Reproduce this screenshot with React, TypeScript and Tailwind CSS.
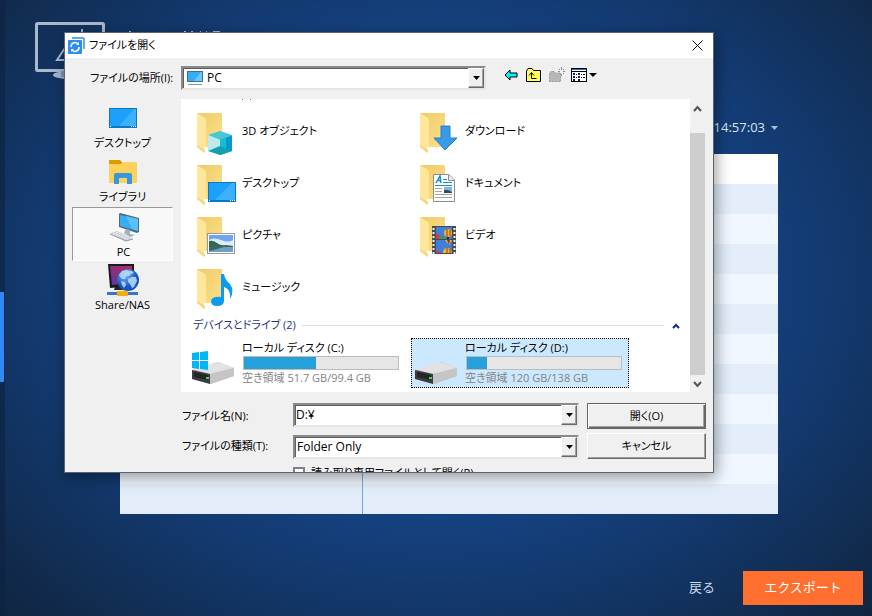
import React, { useState } from "react";

interface Place {
    id: string;
    label: string;
    icon: React.ReactNode;
}

const DesktopIcon = () => (
    <svg width="32" height="32" viewBox="0 0 32 32">
        <rect x="2" y="6" width="28" height="20" fill="#0c78c4" />
        <rect x="3" y="7" width="26" height="17" fill="#1ca0fb" />
        <path d="M12 24 L27 7 H29 V24 Z" fill="#3db0fd" />
        <path d="M3 24.500 h1 M24 24.500 h1 M26 24.500 h1 M28 24.500 h1" stroke="#fff" />
    </svg>
);

const LibraryIcon = () => (
    <svg width="32" height="32" viewBox="0 0 32 32">
        <path d="M2 5 q0 -1 1 -1 H13 l2 2 v2 H2 Z" fill="#df9a00" />
        <path d="M2 8 H14 l2 -2 H29 q1 0 1 1 V27 H2 Z" fill="#fdd25c" />
        <path d="M7 28 V19 q0 -2 2 -2 H23 q2 0 2 2 V28 H20 V22 H12 V28 Z" fill="#3a96dd" />
    </svg>
);

const ComputerIcon = () => (
    <svg width="32" height="32" viewBox="0 0 32 32">
        <path d="M11 3 L12 2 L31 7 V21 L29 22 L11 16 Z" fill="#4d6b80" />
        <path d="M12 4 L30 8 V20 L12 15 Z" fill="#35aef5" />
        <path d="M18 5 L30 8 V20 L24 18 Z" fill="#58c0fa" />
        <path d="M18 18 L22 19 V23 L27 24 L22 26 L16 22 Z" fill="#9eb1bd" />
        <path d="M2 22 L9 20 L25 27 L18 30 Z" fill="#cbd0d4" />
        <path d="M5 22 L20 28 M8 21 L23 27" stroke="#f4f6f7" strokeDasharray="2 1" />
        <path d="M2 23 L18 30 L25 28" stroke="#8d979e" fill="none" />
    </svg>
);

const ShareIcon = () => (
    <svg width="32" height="32" viewBox="0 0 32 32">
        <defs>
            <linearGradient id="screen" x1="0" y1="1" x2="1" y2="0">
                <stop offset="0" stopColor="#5b37a5" />
                <stop offset="1" stopColor="#c22552" />
            </linearGradient>
            <radialGradient id="globe" cx=".4" cy=".3">
                <stop offset="0" stopColor="#73b8fa" />
                <stop offset="1" stopColor="#1556bd" />
            </radialGradient>
        </defs>
        <path d="M1 0 H27 V22 L3 24 Z" fill="#181820" />
        <path d="M3 2 H25 V19 L5 21 Z" fill="url(#screen)" />
        <path d="M8 23 H17 V26 H7 Z" fill="#252525" />
        <circle cx="21" cy="16" r="11" fill="url(#globe)" />
        <path d="M12 11 L15 7 L19 6 L25 7 L27 9 L24 10 L22 12 L19 12 L18 15 L15 15 L13 13 Z M21 15 L25 13 L29 13 L30 17 L27 23 L25 24 L23 20 L21 18 Z M14 17 L18 18 L19 21 L17 24 L15 21 Z" fill="#b9dcfb" fillOpacity=".85" />
        <rect y="28" width="31" height="3" fill="#3d72cf" />
        <rect x="10" y="27" width="11" height="5" rx="1" fill="#f4ad13" />
    </svg>
);

const overlays: Record<string, React.ReactNode> = {
    objects: (
        <>
            <path d="M18 28 L30 24 L42 28 L30 33 Z" fill="#46c7d6" />
            <path d="M18 28 L30 33 V48 L18 44 Z" fill="#bdebf0" />
            <path d="M30 33 L42 28 V44 L30 48 Z" fill="#0799c9" />
            <path d="M30 33 L36 30 V46 L30 48 Z" fill="#17bcd0" />
            <path d="M18 44 L30 39 V48 Z M30 39 L42 44 L30 48 Z" fill="#12a1ad" />
        </>
    ),
    download: <path d="M28 19 H37 V31 H44 L32 43 L21 31 H28 Z" fill="#389bea" stroke="#2380cd" />,
    desktop: (
        <>
            <rect x="18" y="23" width="28" height="20" fill="#0c78c4" />
            <rect x="19" y="24" width="26" height="17" fill="#1ca0fb" />
            <path d="M25 41 L42 24 H45 V41 Z" fill="#3db0fd" />
            <path d="M19 41.500 h1 M40 41.500 h1 M42 41.500 h1 M44 41.500 h1" stroke="#fff" />
        </>
    ),
    document: (
        <>
            <path d="M20.5 15.5 H36 L41.5 21 V42.5 H20.5 Z" fill="#fff" stroke="#8d8d8d" />
            <path d="M35.500 15.500 V21.500 H41" fill="#eee" stroke="#8d8d8d" />
            <path d="M23 24 L27 17 L28 24 M24.500 21.500 H28" stroke="#178bd7" strokeWidth="1.500" fill="none" />
            <path d="M30 20.500 h4 M30 23.500 h9 M22 26.500 h17" stroke="#178bd7" />
            <path d="M22 29.500 h7 M22 32.500 h7 M22 35.500 h17 M22 38.500 h17" stroke="#a5a5a5" />
            <rect x="31" y="28" width="8" height="6" fill="#80b5ea" />
            <path d="M31 34 V31 L35 31 L39 33 V34 Z" fill="#34495c" />
        </>
    ),
    picture: (
        <>
            <rect x="17.500" y="22.500" width="27" height="20" fill="#fff" stroke="#9a9a9a" />
            <rect x="19" y="24" width="24" height="17" fill="#6da5ef" />
            <path d="M19 29 q5 -3 12 0 t12 0 V36 H19 Z" fill="#dcecfb" />
            <path d="M19 30 Q23 29 27 32 T36 34 L43 35 V37 H19 Z" fill="#38684c" />
            <rect x="19" y="36" width="24" height="5" fill="#6f9fc6" />
            <path d="M19 36 L34 36 L24 39 L19 40 Z" fill="#376878" />
        </>
    ),
    video: (
        <>
            <rect x="19" y="15" width="24" height="28" fill="#4b4b4b" />
            <path d="M20.500 17 V43 M41.500 17 V43" stroke="#efefef" strokeWidth="2" strokeDasharray="2 2" />
            <rect x="23" y="16" width="16" height="12" fill="#3e7fdb" />
            <rect x="23" y="29" width="16" height="13" fill="#3e7fdb" />
            <path d="M23 22 L30 28 H23 Z" fill="#d6355c" />
            <path d="M27 25 L35 28 H26 Z" fill="#3c9a48" />
            <ellipse cx="35" cy="22" rx="4" ry="4" fill="#f5b51b" />
            <path d="M34 18 V26 M37 19 V25" stroke="#a0362d" />
            <path d="M34 27 h2" stroke="#222" strokeWidth="2" />
            <path d="M32 29 H39 L36 34 Z" fill="#f5b51b" />
            <path d="M34 29 L36 34 L37 29 Z" fill="#8c3440" />
            <path d="M30 42 q0 -5 4 -5 t5 5 Z" fill="#f5b51b" />
            <path d="M34 37 V42 M37 38 V42" stroke="#a0362d" />
            <path d="M23 39 L29 42 H23 Z" fill="#d6355c" />
        </>
    ),
    music: (
        <path d="M31 11 H34 Q35 17 40 21 Q45 28 40 36 Q41 26 34 24 V38 Q34 43 27 43 Q21 43 21 38 Q22 33 31 34 Z" fill="#0d9bf2" />
    ),
};

function FolderIcon({ kind }: { kind: string }) {
    return (
        <svg width="48" height="48" viewBox="0 0 48 48" className="shrink-0">
            <defs>
                <linearGradient id={`back-${kind}`} x1="0" y1="0" x2="1" y2="1">
                    <stop offset="0" stopColor="#edcb67" />
                    <stop offset="1" stopColor="#ffe08b" />
                </linearGradient>
            </defs>
            <path d="M7 6 H32 V40 H15 Z" fill={`url(#back-${kind})`} />
            <path d="M7 6 L15 11 Q16 12 16 14 V40 H14 V46 L7 40 Z" fill="#ffe69d" />
            <path d="M7 38 L15 43 V46 L7 40 Z" fill="#f8d57a" />
            {overlays[kind]}
        </svg>
    );
}

function DriveIcon({ system }: { system: boolean }) {
    return (
        <svg width="48" height="48" viewBox="0 0 48 48" className="shrink-0">
            <path d="M2 31 L28 23 L44 29 V37 L21 45 L2 40 Z" fill="#c2c2c4" />
            <path d="M2 30 L27 23 L44 29 L20 35 Z" fill="#e2e2e5" />
            <path d="M2 31 L20 35 V45 L2 40 Z" fill="#3b3d40" />
            <path d="M4 33 L18 36 V41 L4 38 Z" fill="#232527" />
            <path d="M20 35 L44 29 V37 L20 45 Z" fill="#c5c5c8" />
            <rect x="16" y="38" width="3" height="2" fill="#3ee143" />
            {system && (
                <path d="M2 14 L9 13 V21 H2 Z M10 13 L18 12 V21 H10 Z M2 22 H9 V30 L2 29 Z M10 22 H18 V31 L10 30 Z" fill="#00b7f1" />
            )}
        </svg>
    );
}

const places: Place[] = [
    { id: "desktop", label: "デスクトップ", icon: <DesktopIcon /> },
    { id: "library", label: "ライブラリ", icon: <LibraryIcon /> },
    { id: "pc", label: "PC", icon: <ComputerIcon /> },
    { id: "share", label: "Share/NAS", icon: <ShareIcon /> },
];

const folders = [
    { kind: "objects", label: "3D オブジェクト" },
    { kind: "download", label: "ダウンロード" },
    { kind: "desktop", label: "デスクトップ" },
    { kind: "document", label: "ドキュメント" },
    { kind: "picture", label: "ピクチャ" },
    { kind: "video", label: "ビデオ" },
    { kind: "music", label: "ミュージック" },
];

const drives = [
    { id: "C", label: "ローカル ディスク (C:)", free: "空き領域 51.7 GB/99.4 GB", used: 47, system: true },
    { id: "D", label: "ローカル ディスク (D:)", free: "空き領域 120 GB/138 GB", used: 13, system: false },
];

const sunken =
    "flex h-6 min-w-0 items-stretch border-2 border-t-[#8a8a8a] border-l-[#8a8a8a] border-r-[#e6e6e6] border-b-[#e6e6e6] bg-white text-xs shadow-[inset_1px_1px_0_#5f5f5f]";

const DropArrow = () => (
    <span className="pointer-events-none flex w-4 shrink-0 items-center justify-center border border-t-white border-l-white border-r-[#696969] border-b-[#696969] bg-[#f0f0f0] shadow-[inset_-1px_-1px_0_#a0a0a0]">
        <svg width="7" height="4" viewBox="0 0 7 4">
            <path d="M0 0 H7 L3.500 4 Z" fill="#000" />
        </svg>
    </span>
);

function OpenDialog() {
    const [place, setPlace] = useState("pc");
    const [drive, setDrive] = useState("D");
    const [fileName, setFileName] = useState("D:¥");

    return (
        <section
            role="dialog"
            aria-labelledby="dialog-title"
            className="absolute top-8 right-[158px] left-16 border border-[#5c6470] bg-[#f0f0f0] text-[11px] text-black shadow-[2px_4px_14px_rgba(0,0,0,0.4)]"
        >
            <header className="flex h-[25px] items-center bg-white pr-2 pl-[3px]">
                <svg width="17" height="17" viewBox="0 0 17 17">
                    <path d="M4 1 H15 q1 0 1 1 V12" fill="none" stroke="#2c8df5" strokeWidth="1.500" />
                    <rect x="0" y="3" width="14" height="14" rx="1" fill="#2c8df5" />
                    <path d="M3 10 a4 4 0 0 1 7 -3 M11 10 a4 4 0 0 1 -7 3" fill="none" stroke="#fff" strokeWidth="1.500" />
                    <path d="M8 8 H11 V5 Z M6 12 H3 V15 Z" fill="#fff" />
                </svg>
                <h2 id="dialog-title" className="ml-1 flex-1">ファイルを開く</h2>
                <button type="button" aria-label="閉じる" className="flex size-4 items-center justify-center">
                    <svg width="11" height="11" viewBox="0 0 11 11">
                        <path d="M0.500 0.500 L10.500 10.500 M10.500 0.500 L0.500 10.500" stroke="#111" />
                    </svg>
                </button>
            </header>

            <div className="flex items-center pt-2 pb-[9px] pl-[25px]">
                <label htmlFor="look-in" className="w-[91px] shrink-0 whitespace-nowrap">ファイルの場所(I):</label>
                <div className={`${sunken} flex-1`}>
                    <svg width="18" height="18" viewBox="0 0 18 18" className="ml-[3px] shrink-0 self-center">
                        <rect x="1" y="2" width="16" height="11" fill="#3d7288" />
                        <rect x="2" y="3" width="14" height="9" fill="#35adf4" />
                        <path d="M8 12 L15 3 H16 V12 Z" fill="#6cc8fa" />
                        <path d="M2 15.500 H16" stroke="#7b96a6" />
                    </svg>
                    <select id="look-in" className="min-w-0 flex-1 appearance-none bg-transparent pl-[3px]">
                        <option>PC</option>
                    </select>
                    <DropArrow />
                </div>
                <div className="-mt-1.5 ml-[18px] flex w-[209px] items-center gap-2">
                    <button type="button" aria-label="戻る">
                        <svg width="14" height="12" viewBox="0 0 14 12">
                            <path d="M1 6 L6 1 V4 H13 V8 H6 V11 Z" fill="#00f5ff" stroke="#000" />
                        </svg>
                    </button>
                    <button type="button" aria-label="上へ">
                        <svg width="15" height="14" viewBox="0 0 15 14">
                            <path d="M0.500 13.500 V3 L2 0.500 H6 L7.500 2.500 H14.500 V13.500 Z" fill="#ffff5c" stroke="#000" />
                            <path d="M5.500 5 V10.500 H10.500 M3 7.500 L5.500 4.500 L8 7.500" fill="none" stroke="#000" />
                        </svg>
                    </button>
                    <button type="button" aria-label="新しいフォルダー" disabled>
                        <svg width="16" height="16" viewBox="0 0 16 16">
                            <path d="M0.500 14.500 V6 L2 4.500 H5 L6.500 6 H11.500 V14.500 Z" fill="#b7b7b7" stroke="#989898" strokeDasharray="2 1" />
                            <path d="M12.500 0 V3 M12.500 7 V9 M9 4.500 H11 M14 4.500 H16 M10 2 l1 1 M14 6 l1 1 M15 2 l-1 1" stroke="#8c8c8c" />
                        </svg>
                    </button>
                    <button type="button" aria-label="表示" className="-ml-0.5 flex items-center gap-0.5">
                        <svg width="16" height="14" viewBox="0 0 16 14">
                            <rect x="0.500" y="0.500" width="15" height="13" fill="#fff" stroke="#000" />
                            <path d="M1 1.500 H15" stroke="#0878d0" />
                            <path d="M1 3.500 H15" stroke="#000" />
                            <path d="M2 6 h2 M7 6 h2 M2 9 h2 M7 9 h2 M2 12 h2 M7 12 h2" stroke="#16166b" strokeWidth="2" />
                            <path d="M5 6.500 h1 M10 6.500 h1 M12 6.500 h2 M5 9.500 h1 M10 9.500 h1 M12 9.500 h2" stroke="#000" />
                        </svg>
                        <svg width="8" height="4" viewBox="0 0 8 4">
                            <path d="M0 0 H8 L4 4 Z" fill="#000" />
                        </svg>
                    </button>
                </div>
            </div>

            <div className="flex pr-2">
                <nav className="flex w-[116px] shrink-0 flex-col pr-2 pl-[7px]">
                    {places.map((p) => (
                        <button
                            key={p.id}
                            type="button"
                            onClick={() => setPlace(p.id)}
                            className={`flex h-[54px] flex-col items-center border leading-4 ${p.id === place
                                ? "border-t-[#999] border-l-[#999] border-r-white border-b-white bg-[#f8f8f8] pt-[3px] pl-0.5"
                                : "border-transparent pt-0.5"
                                }`}
                        >
                            {p.icon}
                            <span className="pt-px">{p.label}</span>
                        </button>
                    ))}
                </nav>

                <div className="min-w-0 flex-1 bg-white pb-1">
                    {/* tail of the group heading that is scrolled out above */}
                    <svg width="80" height="6" viewBox="0 0 80 6" className="block">
                        <path d="M61 0.500 h1 M69 0.500 h1" stroke="#5a6fae" />
                    </svg>
                    <ul className="grid grid-cols-[repeat(auto-fill,218px)] gap-x-[5px] pl-[7px]">
                        {folders.map((f) => (
                            <li key={f.kind} className="flex h-[52px] items-center gap-1 pl-0.5">
                                <FolderIcon kind={f.kind} />
                                {f.label}
                            </li>
                        ))}
                    </ul>
                    <div className="flex h-[25px] items-center gap-1.5 pr-2 pl-3 text-[#1e3287]">
                        <h3 className="whitespace-nowrap">デバイスとドライブ (2)</h3>
                        <span className="h-px flex-1 bg-[#d5dfec]" />
                        <button type="button" aria-label="折りたたむ" className="flex w-3 justify-center">
                            <svg width="8" height="6" viewBox="0 0 8 6">
                                <path d="M1 5 L4 2 L7 5" fill="none" stroke="#0b2d87" strokeWidth="2" />
                            </svg>
                        </button>
                    </div>
                    <div className="grid grid-cols-[repeat(auto-fill,218px)] gap-x-[5px] pl-[7px]">
                        {drives.map((d) => (
                            <button
                                key={d.id}
                                type="button"
                                onClick={() => setDrive(d.id)}
                                className={`flex h-[50px] items-center gap-1 border pr-1 pl-px text-left leading-4 ${d.id === drive
                                    ? "border-dotted border-black bg-[#cce8ff]"
                                    : "border-transparent"
                                    }`}
                            >
                                <DriveIcon system={d.system} />
                                <span className="flex min-w-0 flex-1 flex-col whitespace-nowrap">
                                    <span>{d.label}</span>
                                    <span className="mr-0.5 ml-px block h-3.5 border border-[#bcbcbc] bg-[#e6e6e6]">
                                        <span className="block h-full bg-[#26a0da]" style={{ width: `${d.used}%` }} />
                                    </span>
                                    <span className="text-[#838383]">{d.free}</span>
                                </span>
                            </button>
                        ))}
                    </div>
                </div>

                <div className="flex w-[15px] shrink-0 flex-col items-center">
                    <svg width="9" height="34" viewBox="0 0 9 34">
                        <path d="M1 12 L4.500 8 L8 12" fill="none" stroke="#555" strokeWidth="2" />
                    </svg>
                    <span className="w-full flex-1 bg-[#cdcdcd]" />
                    <svg width="9" height="17" viewBox="0 0 9 17">
                        <path d="M1 7 L4.500 11 L8 7" fill="none" stroke="#555" strokeWidth="2" />
                    </svg>
                </div>
            </div>

            <form className="flex flex-col gap-1 pt-[11px] pr-[7px] pl-[117px]" onSubmit={(e) => e.preventDefault()}>
                <div className="flex h-[26px] items-start">
                    <label htmlFor="file-name" className="w-[111px] shrink-0 leading-[26px]">ファイル名(N):</label>
                    <div className={`${sunken} flex-1`}>
                        <input
                            id="file-name"
                            value={fileName}
                            onChange={(e) => setFileName(e.target.value)}
                            className="min-w-0 flex-1 bg-transparent pl-px outline-none"
                        />
                        <DropArrow />
                    </div>
                    <button
                        type="submit"
                        className="ml-2 h-[26px] w-[119px] border border-[#646464] bg-[#f0f0f0] shadow-[inset_1px_1px_0_#fff,inset_-1px_-1px_0_#696969,inset_-2px_-2px_0_#a0a0a0]"
                    >
                        開く(O)
                    </button>
                </div>
                <div className="flex h-[26px] items-end">
                    <label htmlFor="file-type" className="w-[111px] shrink-0 leading-[26px]">ファイルの種類(T):</label>
                    <div className={`${sunken} flex-1`}>
                        <select id="file-type" className="min-w-0 flex-1 appearance-none bg-transparent pl-0.5">
                            <option>Folder Only</option>
                        </select>
                        <DropArrow />
                    </div>
                    <button
                        type="button"
                        className="ml-2 h-[26px] w-[119px] border border-t-white border-l-white border-r-[#696969] border-b-[#696969] bg-[#f0f0f0] shadow-[inset_-1px_-1px_0_#a0a0a0]"
                    >
                        キャンセル
                    </button>
                </div>
                <div className="mt-1 h-[5px] overflow-hidden pl-[111px]">
                    <label className="flex items-start gap-1.5 leading-3">
                        <input type="checkbox" className="size-3 appearance-none border-2 border-[#808080] bg-white" />
                        読み取り専用ファイルとして開く(R)
                    </label>
                </div>
            </form>
        </section>
    );
}

export default function App() {
    return (
        <main className="relative flex min-h-screen flex-col bg-[radial-gradient(ellipse_at_50%_45%,#1a56a6_0%,#174a90_35%,#13396f_65%,#10253f_100%)] font-['Open_Sans','Noto_Sans_CJK_JP',sans-serif] [font-feature-settings:'palt']">
            <aside className="absolute inset-y-0 left-0 flex w-[5px] items-center bg-[#0d2445]/70">
                <span className="mt-[58px] h-[90px] w-1 bg-[#2f8af5]" />
            </aside>

            <header className="pt-[22px] pl-[35px]">
                <svg width="190" height="58" viewBox="0 0 190 58">
                    <rect x="1.500" y="1.500" width="67" height="47" rx="1" fill="none" stroke="#a9b8cd" strokeWidth="3" />
                    <path d="M47 7 V14 M32 23 L22 38 H34" fill="none" stroke="#a9b8cd" strokeWidth="2" />
                    <ellipse cx="34" cy="53" rx="16" ry="4" fill="#a9b8cd" />
                    <path d="M26 49 H44 V55 H26 Z" fill="#7f95b3" />
                    <path d="M94 9.500 h2 M149 9.500 h2 M156 9.500 h2 M165 9.500 h1 M171 9.500 h1 M178 9.500 h7" stroke="#a9b8cd" />
                </svg>
            </header>

            <div className="mt-10 mr-[94px] flex h-4 items-center justify-end">
                <button type="button" className="flex items-center gap-1.5 text-[13px] text-[#dbe5f3]">
                    14:57:03
                    <svg width="7" height="4" viewBox="0 0 7 4">
                        <path d="M0 0 H7 L3.500 4 Z" fill="#a9bdd8" />
                    </svg>
                </button>
            </div>

            <div className="mt-[18px] mr-[94px] ml-[120px]">
                <table className="w-full table-fixed border-collapse">
                    <colgroup>
                        <col className="w-[242px]" />
                        <col />
                    </colgroup>
                    <tbody>
                        {Array.from({ length: 12 }, (_, i) => (
                            <tr key={i} className="h-[30px] bg-[#f0f6fe] first:bg-white even:bg-[#e2edf9]">
                                <td className="border-r border-[#7ea6d3]" />
                                <td />
                            </tr>
                        ))}
                    </tbody>
                </table>
            </div>

            <footer className="mt-auto flex items-center justify-end gap-7 pr-[9px] pb-[11px] text-[13px] [font-feature-settings:normal]">
                <button type="button" className="text-[#cfdaea]">戻る</button>
                <button type="button" className="h-[34px] w-[120px] bg-[#ff6f30] text-white">エクスポート</button>
            </footer>

            <OpenDialog />
        </main>
    );
}
